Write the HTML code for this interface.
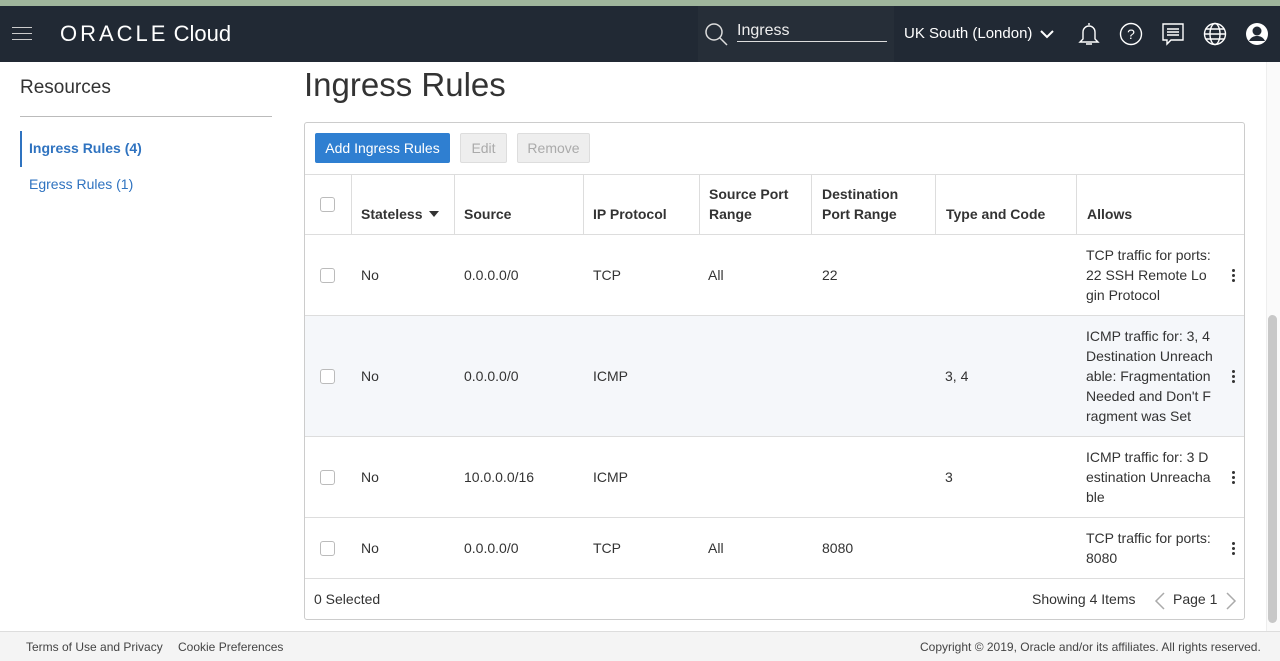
<!DOCTYPE html><html><head><style>
*{margin:0;padding:0;box-sizing:border-box}
body{width:1280px;height:661px;overflow:hidden;background:#fff;font-family:"Liberation Sans",Arial,sans-serif;color:#333;position:relative;font-size:14px}
.a{position:absolute}
.cb{position:absolute;width:15px;height:15px;border:1px solid #bbb;border-radius:3px;background:#fff}
.th{position:absolute;font-weight:bold;font-size:14px;color:#333;line-height:20px}
.td{position:absolute;font-size:14px;line-height:20px;color:#333}
.vl{position:absolute;top:174px;height:60px;width:1px;background:#ddd}
.hl{position:absolute;left:305px;width:939px;height:1px;background:#ddd}
.keb{position:absolute;left:1232px;width:3px}
.keb i{display:block;width:3px;height:3px;background:#333;border-radius:50%;margin-bottom:2px}
</style></head><body>
<div class="a" style="left:0;top:0;width:1280px;height:6px;background:#9fb59c"></div>
<div class="a" style="left:0;top:6px;width:1280px;height:56px;background:#212934"></div>
<div class="a" style="left:12px;top:27px;width:20px;height:1px;background:#ccc"></div>
<div class="a" style="left:12px;top:33px;width:20px;height:1px;background:#ccc"></div>
<div class="a" style="left:12px;top:39px;width:20px;height:1px;background:#ccc"></div>
<div class="a" style="left:60px;top:20px;color:#fff;font-size:22px;line-height:28px;white-space:nowrap"><span style="letter-spacing:3px">ORACLE</span><span style="margin-left:-1px"> Cloud</span></div>
<div class="a" style="left:698px;top:6px;width:196px;height:56px;background:#262e38"></div>
<svg class="a" style="left:704px;top:22px" width="26" height="26" viewBox="0 0 26 26" fill="none" stroke="#ddd" stroke-width="1.5"><circle cx="10" cy="10" r="8"/><path d="M16 16l7 7"/></svg>
<div class="a" style="left:737px;top:22px;color:#eee;font-size:16px">Ingress</div>
<div class="a" style="left:737px;top:41px;width:150px;height:1px;background:#ddd"></div>
<div class="a" style="left:904px;top:25px;color:#fff;font-size:15px">UK South (London)</div>
<svg class="a" style="left:1040px;top:29px" width="14" height="10" viewBox="0 0 14 10" fill="none" stroke="#fff" stroke-width="2"><path d="M1 2l6 6 6-6"/></svg>
<svg class="a" style="left:1077px;top:21px" width="24" height="26" viewBox="0 0 24 26" fill="none" stroke="#fff" stroke-width="1.4"><path d="M12 2v2M6 18V11a6 6 0 0112 0v7l3 3H3z M9 23h6"/></svg>
<svg class="a" style="left:1119px;top:22px" width="24" height="24" viewBox="0 0 24 24" fill="none" stroke="#fff" stroke-width="1.4"><circle cx="12" cy="12" r="10.5"/><text x="12" y="17" fill="#fff" stroke="none" font-size="14" text-anchor="middle" font-family="Liberation Sans">?</text></svg>
<svg class="a" style="left:1161px;top:22px" width="24" height="26" viewBox="0 0 24 26" fill="none" stroke="#fff" stroke-width="1.4"><path d="M2 2h20v16H10l-4 4v-4H2z M6 7h12M6 10h12M6 13h12"/></svg>
<svg class="a" style="left:1203px;top:22px" width="24" height="24" viewBox="0 0 24 24" fill="none" stroke="#fff" stroke-width="1.4"><circle cx="12" cy="12" r="10.5"/><ellipse cx="12" cy="12" rx="5" ry="10.5"/><path d="M1.5 12h21M3 7h18M3 17h18"/></svg>
<svg class="a" style="left:1245px;top:22px" width="24" height="24" viewBox="0 0 24 24"><circle cx="12" cy="12" r="11" fill="#fff"/><circle cx="12" cy="9" r="4.5" fill="#212934"/><path d="M4 19c2-4 5-5 8-5s6 1 8 5" fill="#212934"/></svg>

<div class="a" style="left:20px;top:77px;font-size:19px;color:#333">Resources</div>
<div class="a" style="left:20px;top:116px;width:252px;height:1px;background:#bbb"></div>
<div class="a" style="left:20px;top:131px;width:2px;height:36px;background:#2f73c0"></div>
<div class="a" style="left:29px;top:140px;color:#2f73c0;font-weight:bold;font-size:14px">Ingress Rules (4)</div>
<div class="a" style="left:29px;top:176px;color:#2f73c0;font-size:14px">Egress Rules (1)</div>

<div class="a" style="left:304px;top:66px;font-size:33px;color:#333">Ingress Rules</div>
<div class="a" style="left:304px;top:122px;width:941px;height:498px;border:1px solid #ccc;border-radius:3px"></div>
<div class="a" style="left:315px;top:133px;width:135px;height:30px;background:#2f7fd1;border-radius:2px;color:#fff;font-size:14px;line-height:30px;text-align:center">Add Ingress Rules</div>
<div class="a" style="left:460px;top:133px;width:47px;height:30px;background:#eee;border:1px solid #ddd;border-radius:2px;color:#aaa;font-size:14px;line-height:28px;text-align:center">Edit</div>
<div class="a" style="left:517px;top:133px;width:73px;height:30px;background:#eee;border:1px solid #ddd;border-radius:2px;color:#aaa;font-size:14px;line-height:28px;text-align:center">Remove</div>

<div class="hl" style="top:174px"></div>
<div class="vl" style="left:351px"></div><div class="vl" style="left:454px"></div><div class="vl" style="left:583px"></div><div class="vl" style="left:699px"></div><div class="vl" style="left:811px"></div><div class="vl" style="left:935px"></div><div class="vl" style="left:1076px"></div>
<div class="cb" style="left:320px;top:197px"></div>
<div class="th" style="left:361px;top:204px">Stateless</div>
<svg class="a" style="left:429px;top:211px" width="10" height="6" viewBox="0 0 10 6"><path d="M0 0h10L5 6z" fill="#333"/></svg>
<div class="th" style="left:464px;top:204px">Source</div>
<div class="th" style="left:593px;top:204px">IP Protocol</div>
<div class="th" style="left:709px;top:184px">Source Port<br>Range</div>
<div class="th" style="left:822px;top:184px">Destination<br>Port Range</div>
<div class="th" style="left:946px;top:204px">Type and Code</div>
<div class="th" style="left:1087px;top:204px">Allows</div>
<div class="hl" style="top:234px"></div>

<div class="cb" style="left:320px;top:268px"></div>
<div class="td" style="left:361px;top:265px">No</div><div class="td" style="left:464px;top:265px">0.0.0.0/0</div><div class="td" style="left:593px;top:265px">TCP</div><div class="td" style="left:708px;top:265px">All</div><div class="td" style="left:822px;top:265px">22</div>
<div class="td" style="left:1086px;top:245px">TCP traffic for ports:<br>22 SSH Remote Lo<br>gin Protocol</div>
<div class="keb" style="top:269px"><i></i><i></i><i></i></div>
<div class="hl" style="top:315px"></div>

<div class="a" style="left:305px;top:316px;width:939px;height:120px;background:#f5f7fa"></div>
<div class="cb" style="left:320px;top:369px"></div>
<div class="td" style="left:361px;top:366px">No</div><div class="td" style="left:464px;top:366px">0.0.0.0/0</div><div class="td" style="left:593px;top:366px">ICMP</div><div class="td" style="left:945px;top:366px">3, 4</div>
<div class="td" style="left:1086px;top:326px">ICMP traffic for: 3, 4<br>Destination Unreach<br>able: Fragmentation<br>Needed and Don't F<br>ragment was Set</div>
<div class="keb" style="top:370px"><i></i><i></i><i></i></div>
<div class="hl" style="top:436px"></div>

<div class="cb" style="left:320px;top:470px"></div>
<div class="td" style="left:361px;top:467px">No</div><div class="td" style="left:464px;top:467px">10.0.0.0/16</div><div class="td" style="left:593px;top:467px">ICMP</div><div class="td" style="left:945px;top:467px">3</div>
<div class="td" style="left:1086px;top:447px">ICMP traffic for: 3 D<br>estination Unreacha<br>ble</div>
<div class="keb" style="top:471px"><i></i><i></i><i></i></div>
<div class="hl" style="top:517px"></div>

<div class="cb" style="left:320px;top:541px"></div>
<div class="td" style="left:361px;top:538px">No</div><div class="td" style="left:464px;top:538px">0.0.0.0/0</div><div class="td" style="left:593px;top:538px">TCP</div><div class="td" style="left:708px;top:538px">All</div><div class="td" style="left:822px;top:538px">8080</div>
<div class="td" style="left:1086px;top:528px">TCP traffic for ports:<br>8080</div>
<div class="keb" style="top:542px"><i></i><i></i><i></i></div>
<div class="hl" style="top:578px"></div>

<div class="td" style="left:314px;top:589px">0 Selected</div>
<div class="td" style="left:1032px;top:589px">Showing 4 Items</div>
<svg class="a" style="left:1154px;top:592px" width="12" height="18" viewBox="0 0 12 18" fill="none" stroke="#aaa" stroke-width="1.5"><path d="M10 1L2 9l8 8"/></svg>
<div class="td" style="left:1173px;top:589px">Page 1</div>
<svg class="a" style="left:1225px;top:592px" width="12" height="18" viewBox="0 0 12 18" fill="none" stroke="#aaa" stroke-width="1.5"><path d="M2 1l8 8-8 8"/></svg>

<div class="a" style="left:1266px;top:62px;width:14px;height:569px;background:#fafafa;border-left:1px solid #eee"></div>
<div class="a" style="left:1268px;top:315px;width:9px;height:308px;background:#c8c8c8;border-radius:5px"></div>

<div class="a" style="left:0;top:631px;width:1280px;height:30px;background:#f4f4f4;border-top:1px solid #ddd"></div>
<div class="a" style="left:26px;top:640px;font-size:12px;color:#444">Terms of Use and Privacy</div>
<div class="a" style="left:178px;top:640px;font-size:12px;color:#444">Cookie Preferences</div>
<div class="a" style="left:920px;top:640px;font-size:12px;color:#444">Copyright © 2019, Oracle and/or its affiliates. All rights reserved.</div>
</body></html>
